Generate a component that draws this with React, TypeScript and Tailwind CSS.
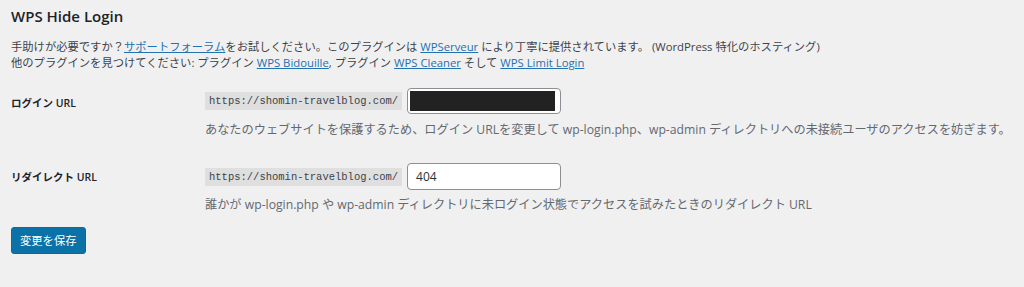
export default function App() {
  const font = {
    fontFamily: '"Open Sans", "Noto Sans CJK JP", sans-serif',
  };

  return (
    <div
      className="min-h-[287px] w-[1024px] bg-[#f0f0f1] px-[11px] pt-[6px] text-[11.3px] text-[#3c434a]"
      style={font}
    >
      <h2 className="text-[15px] font-semibold leading-[20px] text-[#1d2327]">WPS Hide Login</h2>

      <div className="mt-[13px] leading-[16px]">
        <p>
          手助けが必要ですか？
          <a className="text-[#2271b1] underline">サポートフォーラム</a>
          をお試しください。このプラグインは{" "}
          <a className="text-[#2271b1] underline">WPServeur</a> により丁寧に提供されています。
          (WordPress 特化のホスティング)
        </p>
        <p>
          他のプラグインを見つけてください: プラグイン{" "}
          <a className="text-[#2271b1] underline">WPS Bidouille</a>, プラグイン{" "}
          <a className="text-[#2271b1] underline">WPS Cleaner</a> そして{" "}
          <a className="text-[#2271b1] underline">WPS Limit Login</a>
        </p>
      </div>

      <div className="mt-[17px] flex flex-col gap-[25px]">
        <div className="flex">
          <div className="w-[194px] shrink-0 pt-[7px] text-[10.5px] font-semibold leading-[16px] text-[#1d2327]">
            ログイン URL
          </div>
          <div>
            <div className="flex items-center gap-[5px]">
              <code className="bg-[#dfdfe0] px-[4px] py-[1px] font-['Liberation_Mono',monospace] text-[10.5px] leading-[16px]">
                https://shomin-travelblog.com/
              </code>
              <div className="h-[26px] w-[154px] rounded-[4px] border border-[#8c8f94] bg-white p-[2px]">
                <div className="h-full w-[145px] bg-[#222222]" />
              </div>
            </div>
            <p className="mt-[8px] text-[12.2px] leading-[16px] text-[#646970]">
              あなたのウェブサイトを保護するため、ログイン URLを変更して wp-login.php、wp-admin ディレクトリへの未接続ユーザのアクセスを妨ぎます。
            </p>
          </div>
        </div>

        <div className="flex">
          <div className="w-[194px] shrink-0 pt-[6px] text-[10.5px] font-semibold leading-[16px] text-[#1d2327]">
            リダイレクト URL
          </div>
          <div>
            <div className="flex items-center gap-[5px]">
              <code className="bg-[#dfdfe0] px-[4px] py-[1px] font-['Liberation_Mono',monospace] text-[10.5px] leading-[16px]">
                https://shomin-travelblog.com/
              </code>
              <div className="flex h-[27px] w-[154px] items-center rounded-[4px] border border-[#8c8f94] bg-white px-[8px] text-[12px] text-[#2c3338]">
                404
              </div>
            </div>
            <p className="mt-[7px] text-[12.2px] leading-[16px] text-[#646970]">
              誰かが wp-login.php や wp-admin ディレクトリに未ログイン状態でアクセスを試みたときのリダイレクト URL
            </p>
          </div>
        </div>
      </div>

      <button className="mt-[14px] h-[27px] rounded-[3px] border border-[#0a6a9d] bg-[#0b72a7] px-[8px] leading-[24px] text-white">
        変更を保存
      </button>
    </div>
  );
}
